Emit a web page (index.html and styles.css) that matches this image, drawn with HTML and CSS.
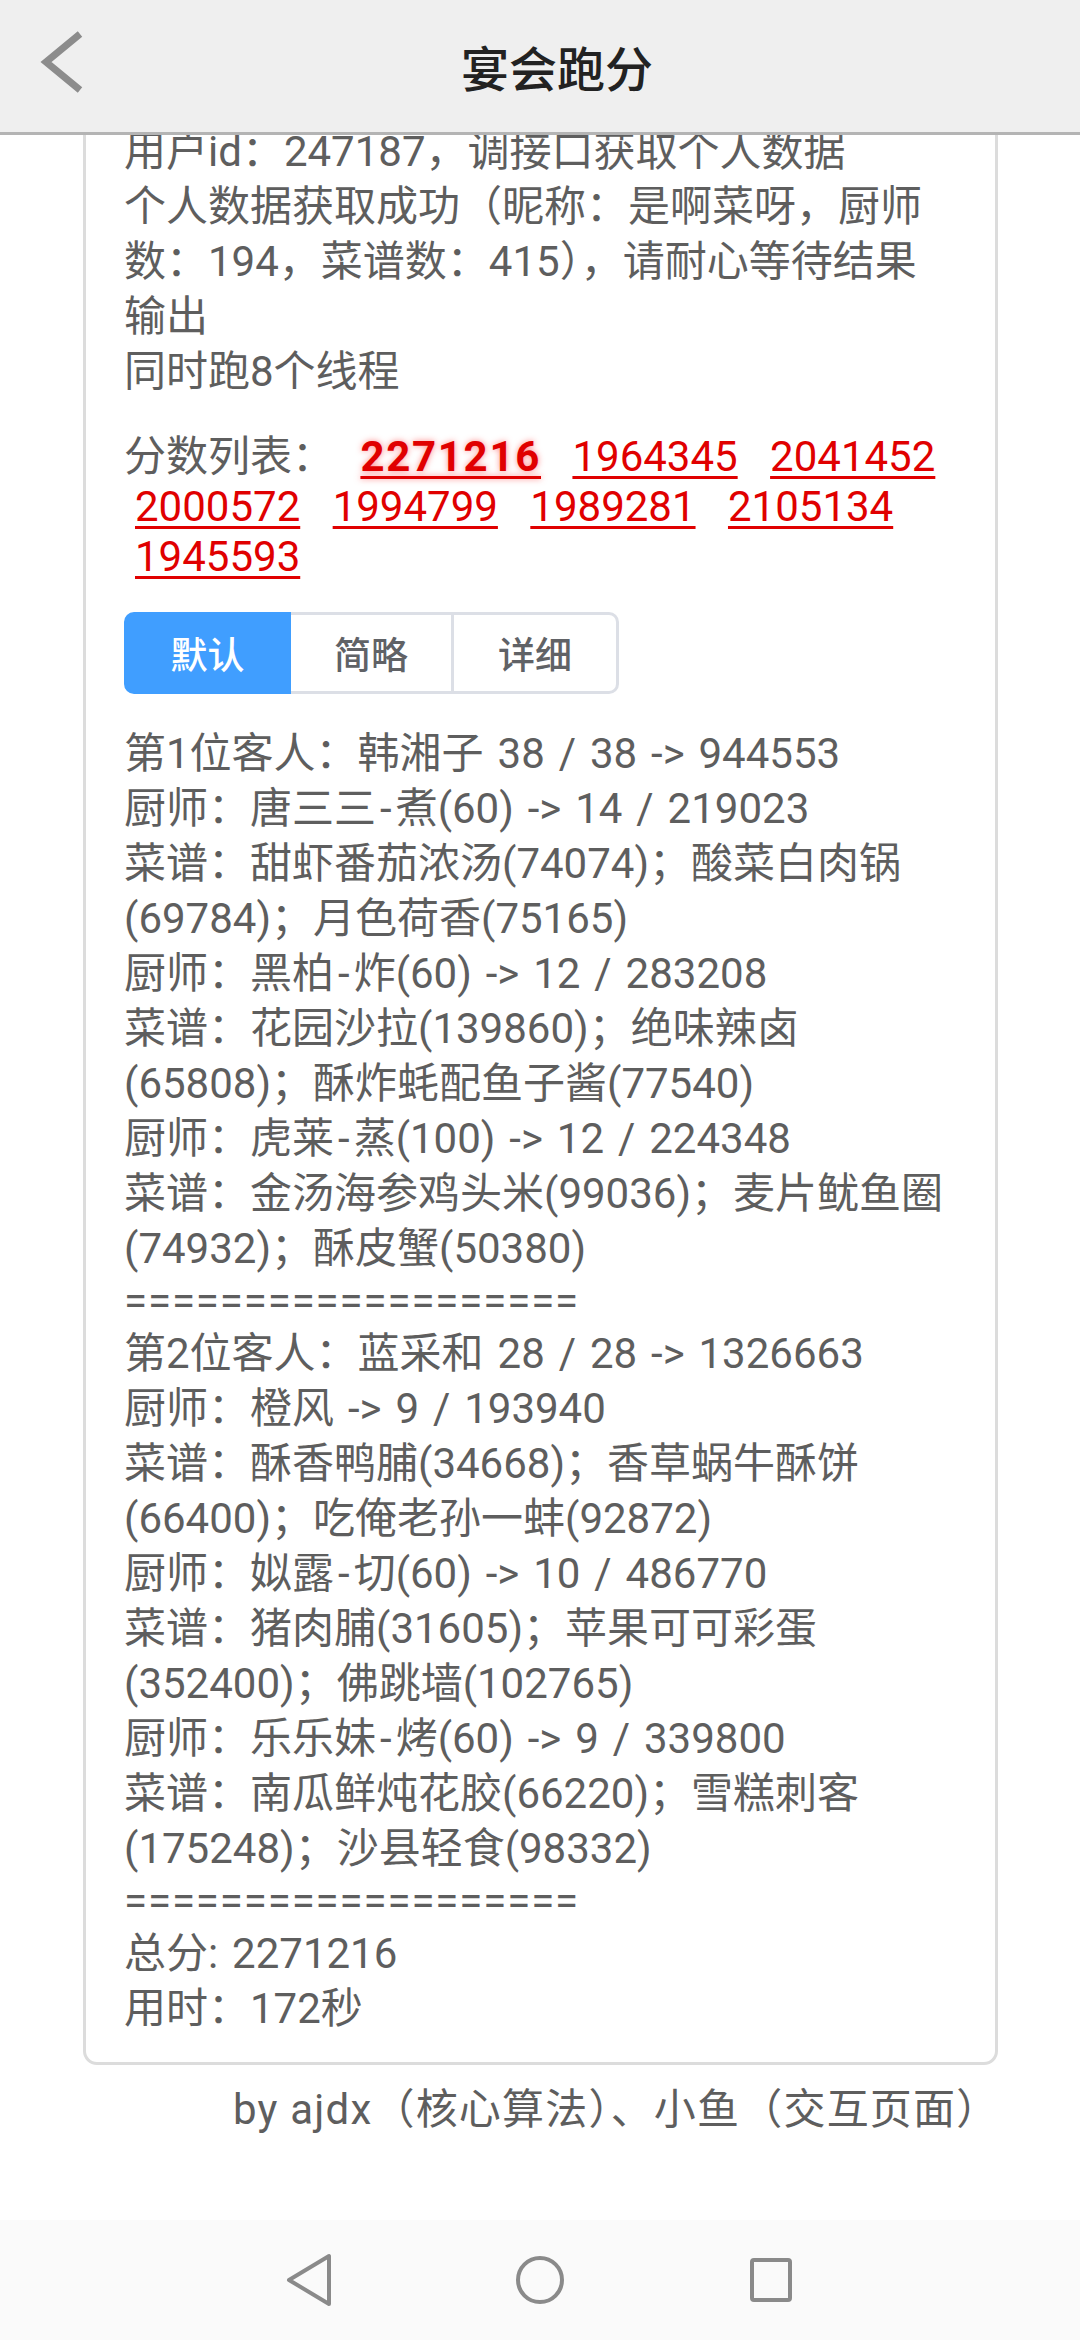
FILE: index.html
```html
<!DOCTYPE html>
<html lang="zh-CN">
<head>
<meta charset="utf-8">
<title>宴会跑分</title>
<link rel="stylesheet" href="styles.css">
</head>
<body>
<div class="screen">
  <header class="topbar">
    <div class="back">
      <svg width="60" height="80" viewBox="0 0 60 80"><polyline points="40,8 6,36 40,64" fill="none" stroke="#8c8c8c" stroke-width="7" stroke-linejoin="miter"/></svg>
    </div>
    <div class="title">宴会跑分</div>
  </header>
  <main class="scroll">
    <section class="card">
      <div class="info">
        <div>用户id：247187，调接口获取个人数据</div>
        <div>个人数据获取成功（昵称：是啊菜呀，厨师数：194，菜谱数：415），请耐心等待结果输出</div>
        <div>同时跑8个线程</div>
      </div>
      <div class="scores">分数列表： <a class="score best">2271216</a> <a class="score">1964345</a> <a class="score">2041452</a> <a class="score">2000572</a> <a class="score">1994799</a> <a class="score">1989281</a> <a class="score">2105134</a> <a class="score">1945593</a></div>
      <div class="seg-group">
        <div class="seg active">默认</div>
        <div class="seg">简略</div>
        <div class="seg">详细</div>
      </div>
      <div class="result">
        <div>第1位客人：韩湘子 38 / 38 -&gt; 944553</div>
        <div>厨师：唐三三<span class="dash">-</span>煮(60) -&gt; 14 / 219023</div>
        <div>菜谱：甜虾番茄浓汤(74074)；酸菜白肉锅(69784)；月色荷香(75165)</div>
        <div>厨师：黑柏<span class="dash">-</span>炸(60) -&gt; 12 / 283208</div>
        <div>菜谱：花园沙拉(139860)；绝味辣卤(65808)；酥炸蚝配鱼子酱(77540)</div>
        <div>厨师：虎莱<span class="dash">-</span>蒸(100) -&gt; 12 / 224348</div>
        <div>菜谱：金汤海参鸡头米(99036)；麦片鱿鱼圈(74932)；酥皮蟹(50380)</div>
        <div class="sep">===================</div>
        <div>第2位客人：蓝采和 28 / 28 -&gt; 1326663</div>
        <div>厨师：橙风 -&gt; 9 / 193940</div>
        <div>菜谱：酥香鸭脯(34668)；香草蜗牛酥饼(66400)；吃俺老孙一蚌(92872)</div>
        <div>厨师：姒露<span class="dash">-</span>切(60) -&gt; 10 / 486770</div>
        <div>菜谱：猪肉脯(31605)；苹果可可彩蛋(352400)；佛跳墙(102765)</div>
        <div>厨师：乐乐妹<span class="dash">-</span>烤(60) -&gt; 9 / 339800</div>
        <div>菜谱：南瓜鲜炖花胶(66220)；雪糕刺客(175248)；沙县轻食(98332)</div>
        <div class="sep">===================</div>
        <div>总分: 2271216</div>
        <div>用时：172秒</div>
      </div>
    </section>
    <div class="credit">by ajdx（核心算法）、小鱼（交互页面）</div>
  </main>
  <nav class="navbar">
    <div class="nav-icon">
      <svg width="60" height="60" viewBox="0 0 60 60"><path d="M50 6 L50 54 L10 30 Z" fill="none" stroke="#8a8a8a" stroke-width="4" stroke-linejoin="round"/></svg>
    </div>
    <div class="nav-icon">
      <svg width="60" height="60" viewBox="0 0 60 60"><circle cx="30" cy="30" r="22" fill="none" stroke="#8a8a8a" stroke-width="4"/></svg>
    </div>
    <div class="nav-icon">
      <svg width="60" height="60" viewBox="0 0 60 60"><rect x="11" y="10" width="38" height="40" rx="2" fill="none" stroke="#8a8a8a" stroke-width="4"/></svg>
    </div>
  </nav>
</div>
</body>
</html>
```
FILE: styles.css
```css
html, body {
  margin: 0;
  padding: 0;
  background: #ffffff;
}
body {
  font-family: Roboto, "Noto Sans CJK SC", sans-serif;
}
.screen {
  width: 1080px;
  height: 2340px;
  display: flex;
  flex-direction: column;
  overflow: hidden;
}
.topbar {
  height: 132px;
  flex: 0 0 auto;
  background: #efefef;
  border-bottom: 3px solid #b4b4b4;
  display: flex;
  align-items: center;
  position: relative;
  z-index: 2;
}
.back {
  width: 120px;
  padding-left: 40px;
  box-sizing: border-box;
  display: flex;
  align-items: center;
}
.back svg {
  display: block;
}
.title {
  flex: 1;
  text-align: center;
  font-size: 48px;
  font-weight: 500;
  color: #222222;
  padding-right: 86px;
  font-family: "Noto Sans CJK SC", sans-serif;
}
.scroll {
  flex: 1 1 auto;
  overflow: hidden;
  background: #ffffff;
}
.card {
  margin: -44px 82px 0 83px;
  border: 3px solid #dcdcdc;
  border-radius: 14px;
  padding: 30px 38px 26px 38px;
  color: #5e5e5e;
  font-size: 42px;
  line-height: 55px;
}
.scores {
  margin-top: 33px;
  line-height: 50px;
}
.score {
  color: #e00000;
  text-decoration: underline;
  text-decoration-thickness: 3px;
  text-underline-offset: 5px;
  margin: 0 11px;
}
.score.best {
  font-weight: 700;
  letter-spacing: 1.7px;
  margin-left: 16px;
  margin-right: 10px;
  text-shadow: 0 0 6px rgba(255, 40, 40, 0.55);
}
.seg-group {
  margin-top: 30px;
  display: flex;
}
.seg {
  width: 165px;
  height: 82px;
  box-sizing: border-box;
  border: 3px solid #dcdfe6;
  border-left-width: 0;
  display: flex;
  align-items: center;
  justify-content: center;
  font-size: 37px;
  font-weight: 500;
  color: #606266;
  background: #ffffff;
  font-family: "Noto Sans CJK SC", sans-serif;
}
.seg:first-child {
  border-left-width: 3px;
  border-radius: 10px 0 0 10px;
  width: 167px;
}
.seg:nth-child(2) {
  width: 163px;
}
.seg:last-child {
  border-radius: 0 10px 10px 0;
}
.seg.active {
  background: #409eff;
  border-color: #409eff;
  color: #ffffff;
}
.result {
  margin-top: 32px;
  word-spacing: 3.5px;
}
.dash {
  padding: 0 4px;
}
.sep {
  line-height: 50px;
  letter-spacing: 0.9px;
}
.credit {
  margin-top: 17px;
  padding-left: 233px;
  font-size: 42px;
  letter-spacing: 1.2px;
  line-height: 55px;
  color: #5e5e5e;
}
.navbar {
  height: 120px;
  flex: 0 0 auto;
  background: #fafafa;
  display: flex;
  align-items: center;
  justify-content: center;
  gap: 171px;
}
.nav-icon {
  width: 60px;
  height: 60px;
}
.nav-icon svg {
  display: block;
}
```
